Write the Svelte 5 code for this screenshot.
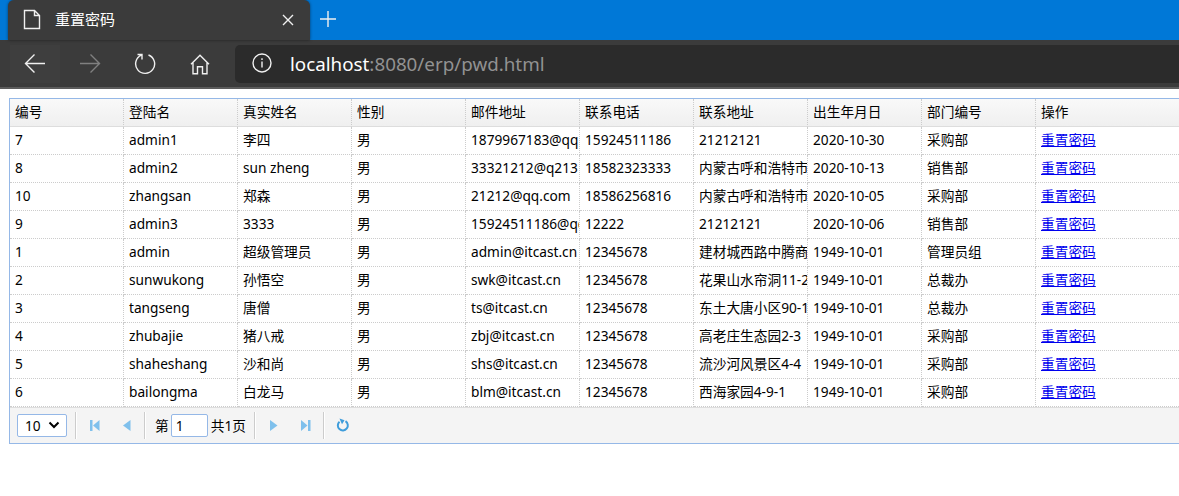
<script>
	const columns = [
		'编号',
		'登陆名',
		'真实姓名',
		'性别',
		'邮件地址',
		'联系电话',
		'联系地址',
		'出生年月日',
		'部门编号'
	];

	const rows = [
		['7', 'admin1', '李四', '男', '1879967183@qq.com', '15924511186', '21212121', '2020-10-30', '采购部'],
		['8', 'admin2', 'sun zheng', '男', '33321212@q213', '18582323333', '内蒙古呼和浩特市', '2020-10-13', '销售部'],
		['10', 'zhangsan', '郑森', '男', '21212@qq.com', '18586256816', '内蒙古呼和浩特市', '2020-10-05', '采购部'],
		['9', 'admin3', '3333', '男', '15924511186@qq.com', '12222', '21212121', '2020-10-06', '销售部'],
		['1', 'admin', '超级管理员', '男', 'admin@itcast.cn', '12345678', '建材城西路中腾商', '1949-10-01', '管理员组'],
		['2', 'sunwukong', '孙悟空', '男', 'swk@itcast.cn', '12345678', '花果山水帘洞11-2', '1949-10-01', '总裁办'],
		['3', 'tangseng', '唐僧', '男', 'ts@itcast.cn', '12345678', '东土大唐小区90-1', '1949-10-01', '总裁办'],
		['4', 'zhubajie', '猪八戒', '男', 'zbj@itcast.cn', '12345678', '高老庄生态园2-3', '1949-10-01', '采购部'],
		['5', 'shaheshang', '沙和尚', '男', 'shs@itcast.cn', '12345678', '流沙河风景区4-4', '1949-10-01', '采购部'],
		['6', 'bailongma', '白龙马', '男', 'blm@itcast.cn', '12345678', '西海家园4-9-1', '1949-10-01', '采购部']
	];

	let page = $state('1');
</script>

<div class="browser">
	<div class="tabs">
		<div class="tab">
			<svg class="doc" width="18" height="22" viewBox="0 0 18 22">
				<path d="M1.5 1.5h10l5 5v13h-15z M11.5 1.5v5h5" />
			</svg>
			<span class="tab-title">重置密码</span>
			<svg class="close" width="12" height="12" viewBox="0 0 12 12">
				<path d="M1 1l10 10M11 1L1 11" />
			</svg>
		</div>
		<svg class="plus" width="18" height="18" viewBox="0 0 18 18">
			<path d="M9 1v16M1 9h16" />
		</svg>
	</div>
	<div class="toolbar">
		<button class="nav back" aria-label="back">
			<svg width="22" height="22" viewBox="0 0 22 22"><path d="M21 10.500H1.500M10.500 1.500l-9 9 9 9" /></svg>
		</button>
		<button class="nav forward" aria-label="forward">
			<svg width="22" height="22" viewBox="0 0 22 22"><path d="M1 10.500h19.500M11.500 1.500l9 9-9 9" /></svg>
		</button>
		<button class="nav" aria-label="reload">
			<svg width="22" height="22" viewBox="0 0 22 22"><path d="M14.5 2a9.5 9.5 0 1 1-7.2 0.2M3.5 1.500H8v5" /></svg>
		</button>
		<button class="nav" aria-label="home">
			<svg width="22" height="22" viewBox="0 0 22 22">
				<path d="M2 11.2L11 2.3l9 8.9M4 9.7v11h4.5v-7h5v7H18v-11" />
			</svg>
		</button>
		<div class="address">
			<svg class="info" width="20" height="20" viewBox="0 0 20 20">
				<circle cx="10" cy="10" r="9" />
				<path d="M10 8.5v6M10 5.3v1.6" />
			</svg>
			<span class="url"><b>localhost</b>:8080/erp/pwd.html</span>
		</div>
	</div>
</div>

<div class="grid">
	<div class="row head">
		{#each columns as column}
			<div class="cell">{column}</div>
		{/each}
		<div class="cell last">操作</div>
	</div>
	{#each rows as row}
		<div class="row">
			{#each row as value}
				<div class="cell">{value}</div>
			{/each}
			<div class="cell last"><a href="#reset">重置密码</a></div>
		</div>
	{/each}
	<div class="pager">
		<button class="size">
			10
			<svg width="12" height="8" viewBox="0 0 12 8"><path d="M1.5 1.5L6 6l4.5-4.5" /></svg>
		</button>
		<i class="sep"></i>
		<svg class="icon" width="16" height="16" viewBox="0 0 16 16"><path d="M3 2h2.500v11H3zM12.500 2v11L6 7.500z" /></svg>
		<svg class="icon" width="16" height="16" viewBox="0 0 16 16"><path d="M11.500 2v11L4 7.500z" /></svg>
		<i class="sep"></i>
		<span class="label">第</span>
		<input bind:value={page} />
		<span class="total">共1页</span>
		<i class="sep"></i>
		<svg class="icon" width="16" height="16" viewBox="0 0 16 16"><path d="M4 2v11L11.500 7.500z" /></svg>
		<svg class="icon" width="16" height="16" viewBox="0 0 16 16"><path d="M3 2v11L9.500 7.500zM10 2h2.500v11H10z" /></svg>
		<i class="sep"></i>
		<svg class="reload" width="16" height="16" viewBox="0 0 16 16">
			<path class="ring" d="M10.500 3.200A5 5 0 1 1 4.500 3.700" />
			<path class="tip" d="M4.500 0.500L9.500 2.200 7 6.200z" />
		</svg>
	</div>
</div>

<style>
	:global(body) {
		margin: 0;
		background: #fff;
		overflow: hidden;
		font-family: 'Noto Sans', 'Noto Sans CJK SC', sans-serif;
	}
	.browser {
		height: 89px;
		box-sizing: border-box;
		background: #3b3b3b;
		border-bottom: 2px solid #5c5c5c;
	}
	.tabs {
		display: flex;
		height: 40px;
		padding-left: 8px;
		background: #0078d7;
	}
	.tab {
		display: flex;
		align-items: center;
		box-sizing: border-box;
		width: 302px;
		padding: 0 16px 0 15px;
		background: #3b3b3b;
		border-radius: 6px 6px 0 0;
		box-shadow: 0 0 3px rgba(0, 0, 0, 0.5);
		color: #fff;
		font-size: 15px;
	}
	svg {
		flex: none;
		fill: none;
		stroke: #f0f0f0;
		stroke-width: 1.4;
	}
	.tab-title {
		flex: 1;
		margin-left: 14px;
		padding-bottom: 2px;
		line-height: 20px;
	}
	.plus {
		margin: 10px 0 0 9px;
	}
	.toolbar {
		display: flex;
		align-items: center;
		height: 47px;
		padding-left: 10px;
	}
	.nav {
		display: flex;
		align-items: center;
		justify-content: center;
		width: 50px;
		height: 38px;
		margin-right: 5px;
		padding: 0;
		border: 0;
		background: none;
	}
	.back {
		background: #3e3e3e;
	}
	.forward svg {
		stroke: #808080;
	}
	.address {
		display: flex;
		align-items: center;
		flex: 1;
		height: 38px;
		margin-left: 5px;
		padding-left: 17px;
		background: #2b2b2b;
		border-radius: 5px 0 0 5px;
	}
	.info {
		margin-bottom: 1px;
	}
	.url {
		margin-left: 18px;
		color: #929292;
		font-size: 18.8px;
		line-height: 26px;
	}
	.url b {
		color: #fff;
		font-weight: 400;
	}
	.grid {
		margin: 9px 0 0 9px;
		border: 1px solid #95b8e7;
		border-right: 0;
		font-size: 13.7px;
		color: #000;
	}
	.row {
		display: flex;
		height: 28px;
	}
	.cell {
		flex: none;
		box-sizing: border-box;
		width: 114px;
		height: 28px;
		padding-left: 5px;
		border-right: 1px dotted #ccc;
		border-bottom: 1px dotted #ccc;
		line-height: 25px;
		white-space: nowrap;
		overflow: hidden;
	}
	.last {
		flex: 1;
		border-right: 0;
	}
	.head {
		background: linear-gradient(#f9f9f9, #efefef);
	}
	.head .cell {
		border-bottom: 1px solid #ddd;
	}
	a {
		color: #00e;
	}
	.pager {
		display: flex;
		align-items: center;
		box-sizing: border-box;
		height: 36px;
		padding-left: 7px;
		background: #f4f4f4;
		border-top: 1px solid #ddd;
	}
	.size {
		display: flex;
		align-items: center;
		justify-content: space-between;
		box-sizing: border-box;
		width: 50px;
		height: 23px;
		padding: 0 6px 0 7px;
		border: 1px solid #95b8e7;
		border-radius: 2px;
		background: #fff;
		color: #000;
		font: inherit;
	}
	.size svg {
		margin-bottom: 1px;
		stroke: #000;
		stroke-width: 2;
	}
	.sep {
		width: 1px;
		height: 27px;
		margin: 0 10px 0 8px;
		background: #ccc;
		border-right: 1px solid #fff;
	}
	.icon {
		margin-right: 16px;
		fill: #7fc0ec;
		stroke: none;
	}
	.icon + .icon {
		margin-right: 9px;
	}
	.icon + .icon + .sep {
		margin-left: 0;
	}
	.label {
		margin: 0 2px 2px -1px;
	}
	input {
		box-sizing: border-box;
		width: 37px;
		height: 23px;
		padding: 0 4px 1px;
		border: 1px solid #95b8e7;
		border-radius: 2px;
		background: #fff;
		color: #000;
		font: inherit;
	}
	.total {
		margin: 0 0 2px 3px;
	}
	.reload .ring {
		stroke: #3f9ddb;
		stroke-width: 2;
	}
	.reload .tip {
		fill: #3f9ddb;
		stroke: none;
	}
</style>
